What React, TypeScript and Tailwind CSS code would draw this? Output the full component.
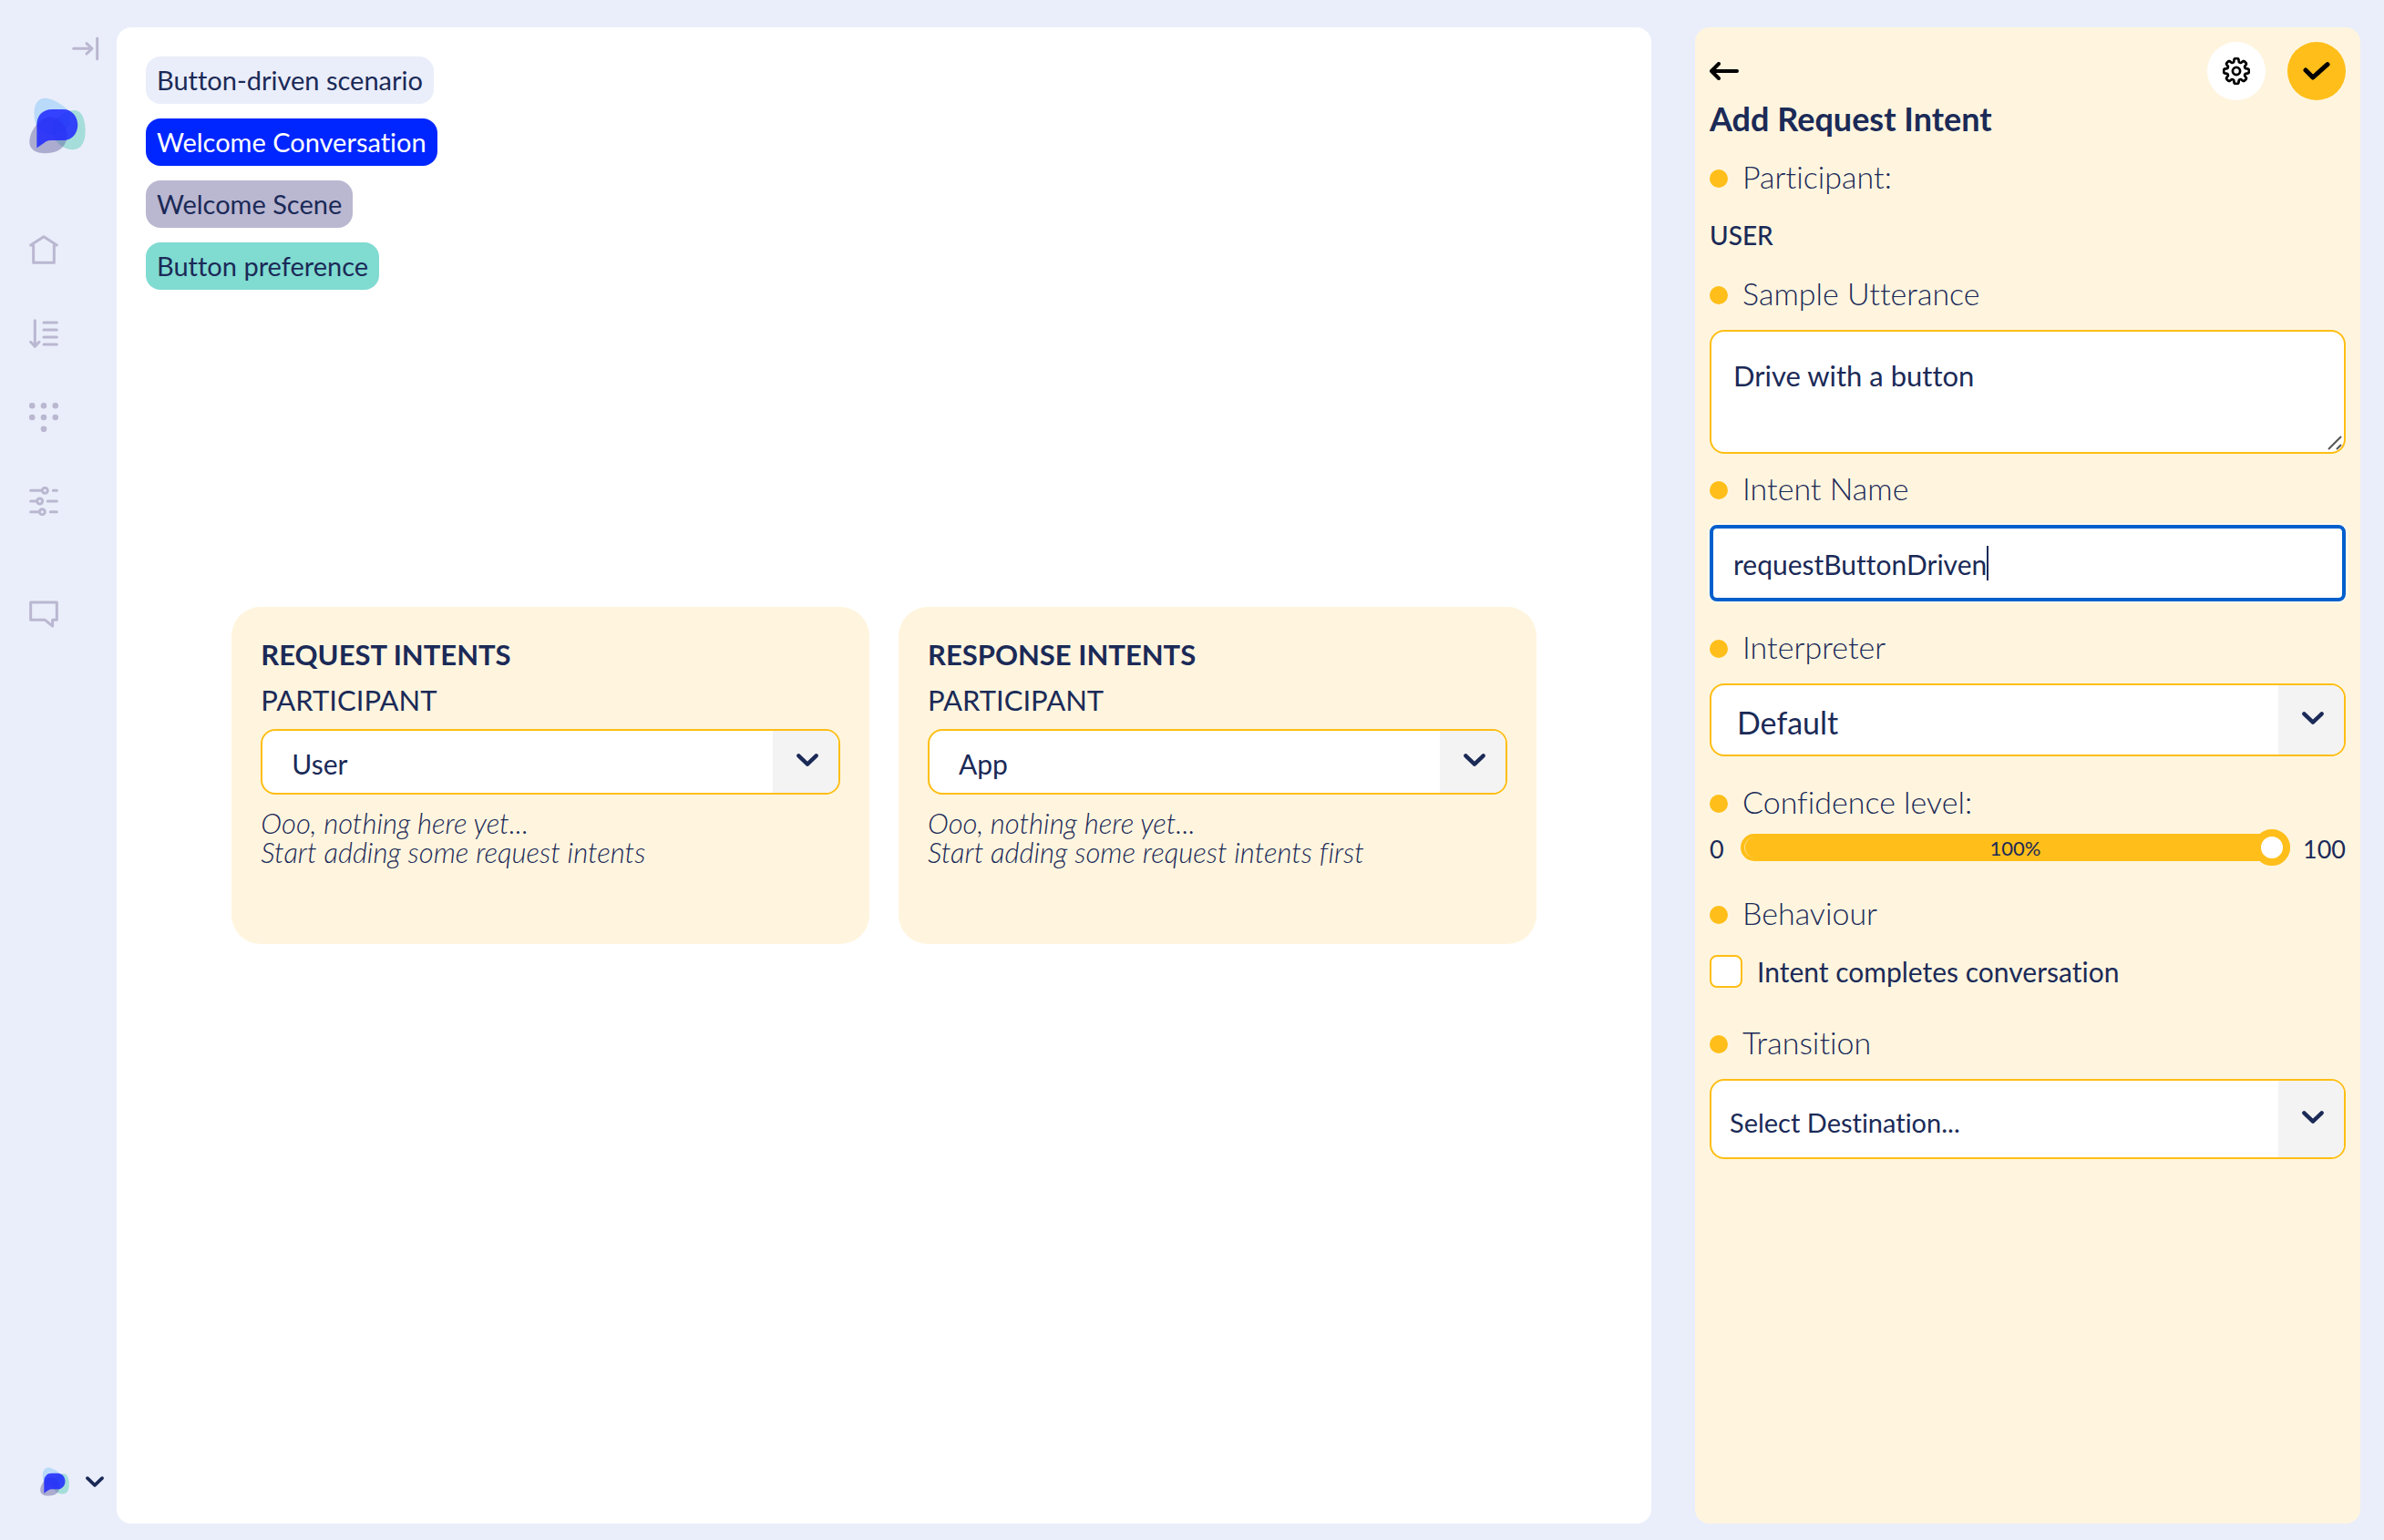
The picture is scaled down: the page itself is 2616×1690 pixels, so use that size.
import { useId, type ReactNode } from "react";

function NavIcon({ children }: { children: ReactNode }) {
  return (
    <svg
      className="size-8"
      viewBox="0 0 96 96"
      fill="none"
      stroke="currentColor"
      strokeWidth="9"
      strokeLinecap="round"
      strokeLinejoin="round"
      aria-hidden="true"
    >
      {children}
    </svg>
  );
}

function Logo({ className }: { className: string }) {
  return (
    <svg className={className} viewBox="23 22 185 184" aria-hidden="true">
      <path
        d="M40 78C38 45 50 22 80 24C105 28 130 45 148 60C160 72 159 100 150 115C135 145 100 152 75 138C50 128 40 108 40 78Z"
        fill="#8fcaf7"
        fillOpacity="0.55"
      />
      <path
        d="M170 63C195 62 205 90 207 125C208 165 195 192 165 192C135 192 98 165 98 125C98 90 140 65 170 63Z"
        fill="#5fccb9"
        fillOpacity="0.5"
      />
      <path
        d="M90 86C122 86 146 112 147 143C147 180 122 204 76 204C45 204 24 192 24 166C24 135 55 88 90 86Z"
        fill="#6c6aa5"
        fillOpacity="0.5"
      />
      <path
        d="M48 187V110C48 80 68 60 98 60H135C162 60 182 83 182 111C182 140 162 162 135 162H92C78 162 68 175 48 187Z"
        fill="#1a24ff"
        fillOpacity="0.84"
      />
    </svg>
  );
}

function Chevron({ className }: { className: string }) {
  return (
    <svg
      className={className}
      viewBox="0 0 72 44"
      fill="none"
      stroke="currentColor"
      strokeWidth="13"
      strokeLinecap="round"
      strokeLinejoin="round"
      aria-hidden="true"
    >
      <path d="M7 8L36 36L65 8" />
    </svg>
  );
}

const gearPath =
  Array.from({ length: 240 }, (_, i) => {
    const a = (i / 240) * Math.PI * 2;
    const r = 35 + 5.5 * Math.tanh(2.6 * Math.cos(8 * a) + 0.5);
    return `${i ? "L" : "M"}${(44 + r * Math.sin(a)).toFixed(1)} ${(44 - r * Math.cos(a)).toFixed(1)}`;
  }).join("") + "Z";

function Select({
  id,
  options,
  className,
}: {
  id: string;
  options: string[];
  className: string;
}) {
  return (
    <div className="relative overflow-hidden rounded-2xl border-2 border-[#ffbe14] bg-white">
      <select
        id={id}
        className={`block w-full appearance-none bg-transparent pt-1 outline-none ${className}`}
      >
        {options.map((o) => (
          <option key={o}>{o}</option>
        ))}
      </select>
      <span className="pointer-events-none absolute inset-y-0 right-0 flex w-18 items-center justify-center bg-[#f3f3f3] pb-1 pl-1">
        <Chevron className="h-4 w-6" />
      </span>
    </div>
  );
}

function IntentCard({
  title,
  participant,
  hint,
}: {
  title: string;
  participant: string;
  hint: string;
}) {
  const id = useId();
  return (
    <section className="min-h-[370px] rounded-[32px] bg-[#fff5df] px-8 pt-[27px]">
      <h2 className="text-[31px] leading-[50px] font-bold">{title}</h2>
      <label htmlFor={id} className="mb-[7px] block text-[31px] leading-[50px]">
        PARTICIPANT
      </label>
      <Select
        id={id}
        options={participant === "User" ? ["User", "App"] : ["App", "User"]}
        className="h-17 pl-8 text-[30px]"
      />
      <p className="mt-[15px] text-[31px] leading-8 font-light italic">
        Ooo, nothing here yet...
        <br />
        {hint}
      </p>
    </section>
  );
}

function FieldLabel({
  htmlFor,
  className = "",
  children,
}: {
  htmlFor?: string;
  className?: string;
  children: ReactNode;
}) {
  const Tag = htmlFor ? "label" : "h2";
  return (
    <Tag
      htmlFor={htmlFor}
      className={`flex h-10 items-center gap-4 text-[34px] font-light ${className}`}
    >
      <span className="size-5 shrink-0 rounded-full bg-[#ffbe19]" />
      <span className="pb-1.5">{children}</span>
    </Tag>
  );
}

const crumbs = [
  { text: "Button-driven scenario", style: "bg-[#eaeefa]" },
  { text: "Welcome Conversation", style: "bg-[#0026ff] text-white" },
  { text: "Welcome Scene", style: "bg-[#bab7d1]" },
  { text: "Button preference", style: "bg-[#80dbd1]" },
];

export default function App() {
  return (
    <div className="flex min-h-screen bg-[#eaeefa] pr-[26px] font-['Lato',sans-serif] text-[#1b2a57] [font-variant-ligatures:none]">
      <aside className="flex w-32 shrink-0 flex-col pt-[39px] pb-12 text-[#bab7d1]">
        <button aria-label="Expand menu" className="mr-[19px] self-end">
          <svg
            className="h-7 w-[30px]"
            viewBox="0 0 90 84"
            fill="none"
            stroke="currentColor"
            strokeWidth="9"
            strokeLinecap="round"
            strokeLinejoin="round"
            aria-hidden="true"
          >
            <path d="M5 43H65M48 26L66 43L48 60M83 9V77" />
          </svg>
        </button>
        <a href="#home" aria-label="Dashboard" className="mt-10 ml-8 self-start">
          <Logo className="size-[62px]" />
        </a>
        <nav className="mt-[89px] ml-8 flex flex-col items-start gap-15">
          <a href="#start" aria-label="Home">
            <NavIcon>
              <path d="M5 33L48 5L91 33H82V91H14V33Z" />
            </NavIcon>
          </a>
          <a href="#order" aria-label="Scenarios">
            <NavIcon>
              <path d="M19 5V91M5 76L19 91L33 76M48 12H91M48 36H91M48 60H91M48 84H91" />
            </NavIcon>
          </a>
          <a href="#grid" aria-label="Interpreters">
            <NavIcon>
              <g fill="currentColor" stroke="none">
                <circle cx="9.6" cy="9.6" r="10" />
                <circle cx="48" cy="9.6" r="10" />
                <circle cx="86.4" cy="9.6" r="10" />
                <circle cx="9.6" cy="48" r="10" />
                <circle cx="48" cy="48" r="10" />
                <circle cx="86.4" cy="48" r="10" />
                <circle cx="48" cy="86.4" r="10" />
              </g>
            </NavIcon>
          </a>
          <a href="#settings" aria-label="Settings">
            <NavIcon>
              <path d="M5 13H42M79 13H91M5 48H25M61 48H91M5 83H33M70 83H91" />
              <circle cx="52" cy="13" r="9" />
              <circle cx="35" cy="48" r="9" />
              <circle cx="43" cy="83" r="9" />
            </NavIcon>
          </a>
          <a href="#chat" aria-label="Preview" className="mt-8">
            <NavIcon>
              <path d="M5 9H91V67H77V87L52 67H5Z" />
            </NavIcon>
          </a>
        </nav>
        <button
          aria-label="Account"
          className="mt-auto mr-3.5 flex items-center gap-4.5 self-end text-[#1b2a57]"
        >
          <Logo className="size-8" />
          <Chevron className="h-3.5 w-5" />
        </button>
      </aside>

      <div className="grid flex-1 grid-cols-[1684fr_730fr] gap-12 pt-[30px] pb-[18px]">
        <main className="grid grid-rows-[1fr_auto_1fr] rounded-2xl bg-white">
          <ul className="flex flex-col items-start gap-4 p-8">
            {crumbs.map((c) => (
              <li key={c.text}>
                <a
                  href="#crumb"
                  className={`flex h-13 items-center rounded-2xl px-3 text-[29px] ${c.style}`}
                >
                  {c.text}
                </a>
              </li>
            ))}
          </ul>
          <div className="mx-auto grid w-[85%] grid-cols-2 gap-8">
            <IntentCard
              title="REQUEST INTENTS"
              participant="User"
              hint="Start adding some request intents"
            />
            <IntentCard
              title="RESPONSE INTENTS"
              participant="App"
              hint="Start adding some request intents first"
            />
          </div>
        </main>

        <form className="rounded-2xl bg-[#fff5df] p-4">
          <div className="flex items-center gap-6">
            <button type="button" aria-label="Back" className="mr-auto text-black">
              <svg
                className="h-5 w-8"
                viewBox="0 0 32 20"
                fill="none"
                stroke="currentColor"
                strokeWidth="4"
                strokeLinecap="round"
                strokeLinejoin="round"
                aria-hidden="true"
              >
                <path d="M3 10H30M10 2L2 10L10 18" />
              </svg>
            </button>
            <button
              type="button"
              aria-label="Settings"
              className="flex size-16 items-center justify-center rounded-full bg-white text-black"
            >
              <svg
                className="size-[30px]"
                viewBox="0 0 88 88"
                fill="none"
                stroke="currentColor"
                strokeWidth="8"
                strokeLinejoin="round"
                aria-hidden="true"
              >
                <path d={gearPath} />
                <circle cx="44" cy="44" r="12" />
              </svg>
            </button>
            <button
              type="submit"
              aria-label="Save"
              className="flex size-16 items-center justify-center rounded-full bg-[#ffbe19] text-black"
            >
              <svg
                className="h-5 w-[30px]"
                viewBox="351 94 90 60"
                fill="none"
                stroke="currentColor"
                strokeWidth="15"
                strokeLinecap="round"
                strokeLinejoin="round"
                aria-hidden="true"
              >
                <path d="M360 121L384 145L432 102" />
              </svg>
            </button>
          </div>
          <h1 className="text-4xl leading-10 font-bold">Add Request Intent</h1>

          <FieldLabel className="mt-[26px]">Participant:</FieldLabel>
          <p className="mt-[22px] text-[28px] leading-10 font-medium">USER</p>

          <FieldLabel htmlFor="utterance" className="mt-[26px]">
            Sample Utterance
          </FieldLabel>
          <div className="relative mt-4.5">
            <textarea
              id="utterance"
              defaultValue="Drive with a button"
              className="block h-34 w-full resize rounded-2xl border-2 border-[#ffbe14] bg-white px-6 pt-7 text-[31px] leading-10 outline-none [&::-webkit-resizer]:hidden"
            />
            <svg
              className="pointer-events-none absolute right-1 bottom-1 size-4"
              viewBox="0 0 16 16"
              stroke="#555"
              strokeWidth="2"
              aria-hidden="true"
            >
              <path d="M1 15L15 1M10 15L15 10" />
            </svg>
          </div>

          <FieldLabel htmlFor="name" className="mt-5">
            Intent Name
          </FieldLabel>
          <div className="mt-4.5 flex h-21 items-center rounded-lg border-4 border-[#005fcc] bg-white pl-[22px] ring-2 ring-white/50">
            <input
              id="name"
              type="text"
              defaultValue="requestButtonDriven"
              className="field-sizing-content pt-0.5 text-[30px] outline-none"
            />
            <span className="h-9.5 w-0.5 bg-[#1b2a57]" />
          </div>

          <FieldLabel htmlFor="interpreter" className="mt-8 mb-4.5">
            Interpreter
          </FieldLabel>
          <Select id="interpreter" options={["Default"]} className="h-19 pl-7 text-[34px]" />

          <FieldLabel htmlFor="confidence" className="mt-8">
            Confidence level:
          </FieldLabel>
          <div className="mt-2 flex h-10 items-center gap-4.5 text-[27px]">
            <span className="pt-1">0</span>
            <div className="grid flex-1 items-center">
              <span className="col-start-1 row-start-1 flex h-[30px] items-center rounded-full bg-[#ffbe19] pl-1">
                <span className="h-5.5 w-3 rounded-l-full border-l border-white/50" />
              </span>
              <span className="col-start-1 row-start-1 text-center text-[22px]">100%</span>
              <input
                id="confidence"
                type="range"
                min="0"
                max="100"
                defaultValue="100"
                className="col-start-1 row-start-1 h-10 w-full appearance-none bg-transparent [&::-webkit-slider-thumb]:size-10 [&::-webkit-slider-thumb]:appearance-none [&::-webkit-slider-thumb]:rounded-full [&::-webkit-slider-thumb]:border-8 [&::-webkit-slider-thumb]:border-[#ffbe19] [&::-webkit-slider-thumb]:bg-white"
              />
            </div>
            <span className="-ml-1 pt-1">100</span>
          </div>

          <FieldLabel className="mt-8.5">Behaviour</FieldLabel>
          <div className="mt-6 flex items-center gap-4">
            <input
              id="completes"
              type="checkbox"
              className="size-9 appearance-none rounded-lg border-2 border-[#ffbe14] bg-white"
            />
            <label htmlFor="completes" className="text-[30px] leading-8">
              Intent completes conversation
            </label>
          </div>

          <FieldLabel htmlFor="destination" className="mt-10.5 mb-4.5">
            Transition
          </FieldLabel>
          <Select
            id="destination"
            options={["Select Destination..."]}
            className="h-21 pt-2 pl-5 text-[29px]"
          />
        </form>
      </div>
    </div>
  );
}
